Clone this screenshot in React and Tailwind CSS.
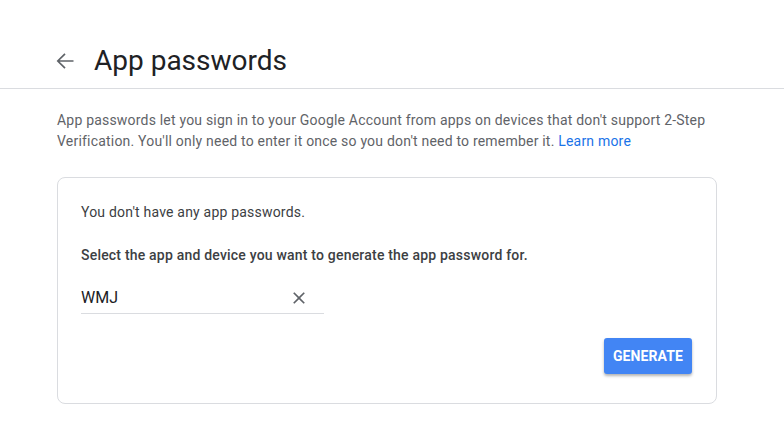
import { useState } from 'react';

export default function App() {
  const [value, setValue] = useState('WMJ');

  return (
    <div className="w-[784px] h-[448px] bg-white font-['Roboto',sans-serif] overflow-hidden">
      {/* Header */}
      <div className="h-[89px] border-b border-[#dadce0] flex items-end pl-[53px] pb-[9px]">
        <button className="w-[24px] h-[36px] flex items-center justify-center text-[#5f6368]">
          <svg width="24" height="24" viewBox="0 0 24 24" fill="none" stroke="currentColor" strokeWidth="1.7">
            <path d="M20.5 12H5M12 4.8 4.8 12l7.2 7.2" />
          </svg>
        </button>
        <h1 className="ml-[17px] text-[28px] leading-9 text-[#202124] font-normal">App passwords</h1>
      </div>

      <div className="pl-[57px] pr-[60px]">
        <p className="mt-[21px] text-[14px] leading-[21px] text-[#5f6368] tracking-[0.2px]">
          App passwords let you sign in to your Google Account from apps on devices that don't support 2-Step
          <br />
          Verification. You'll only need to enter it once so you don't need to remember it.{' '}
          <a href="#" className="text-[#1a73e8]">Learn more</a>
        </p>

        {/* Card */}
        <div className="mt-[25px] w-[660px] h-[227px] border border-[#dadce0] rounded-[8px] px-[23px] pt-[24px]">
          <p className="text-[14px] leading-5 text-[#3c4043] tracking-[0.2px]">You don't have any app passwords.</p>
          <p className="mt-[23px] text-[14px] leading-5 font-medium text-[#3c4043] tracking-[0.2px]">
            Select the app and device you want to generate the app password for.
          </p>

          <div className="mt-[18px] w-[243px] h-[31px] border-b border-[#dadce0] flex items-center">
            <input
              value={value}
              onChange={(e) => setValue(e.target.value)}
              className="flex-1 min-w-0 text-[16px] text-[#202124] outline-none bg-transparent"
            />
            <button onClick={() => setValue('')} className="mr-[15px] text-[#5f6368]">
              <svg width="20" height="20" viewBox="0 0 24 24" fill="currentColor">
                <path d="M19 6.41L17.59 5 12 10.59 6.41 5 5 6.41 10.59 12 5 17.59 6.41 19 12 13.41 17.59 19 19 17.59 13.41 12z" />
              </svg>
            </button>
          </div>

          <div className="flex justify-end mt-[24px] pr-[1px]">
            <button className="w-[88px] h-[36px] bg-[#4285f4] rounded-[3px] text-white text-[14px] font-bold tracking-[0.1px] shadow-[0_2px_3px_rgba(0,0,0,0.3)]">
              GENERATE
            </button>
          </div>
        </div>
      </div>
    </div>
  );
}
